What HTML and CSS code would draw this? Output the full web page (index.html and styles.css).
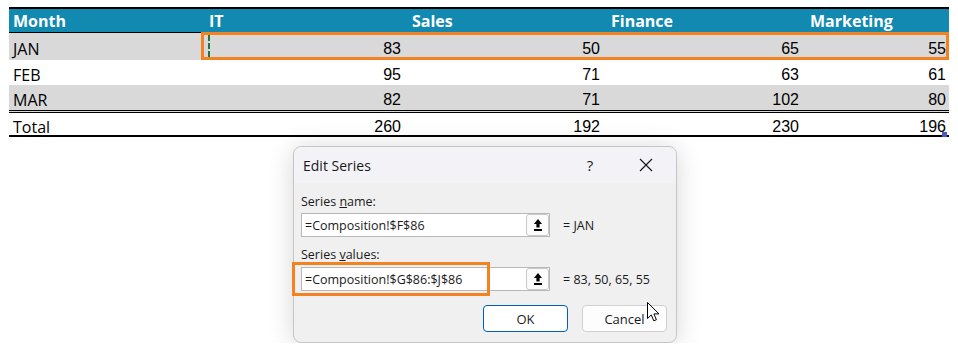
FILE: index.html
```html
<!DOCTYPE html>
<html>
<head>
<meta charset="utf-8">
<link rel="stylesheet" href="styles.css">
</head>
<body>
<div class="sheet">
  <div class="table">
    <div class="row head">
      <div class="c first">Month</div>
      <div class="c">IT</div>
      <div class="c">Sales</div>
      <div class="c">Finance</div>
      <div class="c">Marketing</div>
    </div>
    <div class="row body r-jan shade">
      <div class="c lbl">JAN</div>
      <div class="c num">83</div>
      <div class="c num">50</div>
      <div class="c num">65</div>
      <div class="c num">55</div>
    </div>
    <div class="row body r-feb">
      <div class="c lbl">FEB</div>
      <div class="c num">95</div>
      <div class="c num">71</div>
      <div class="c num">63</div>
      <div class="c num">61</div>
    </div>
    <div class="row body r-mar shade">
      <div class="c lbl">MAR</div>
      <div class="c num">82</div>
      <div class="c num">71</div>
      <div class="c num">102</div>
      <div class="c num">80</div>
    </div>
    <div class="row body r-tot">
      <div class="c lbl">Total</div>
      <div class="c num">260</div>
      <div class="c num">192</div>
      <div class="c num">230</div>
      <div class="c num">196</div>
    </div>
    <div class="sel"><div class="ants"></div></div>
    <div class="handle"></div>
  </div>

  <div class="dialog">
    <div class="titlebar">
      <span class="title">Edit Series</span>
      <span class="help">?</span>
      <span class="close">
        <svg width="14" height="14" viewBox="0 0 14 14"><path d="M1 1 L13 13 M13 1 L1 13" stroke="#1a1a1a" stroke-width="1.2" fill="none"/></svg>
      </span>
    </div>
    <div class="dbody">
      <div class="label">Series <u>n</u>ame:</div>
      <div class="field f1">
        <div class="input">
          <span>=Composition!$F$86</span>
          <span class="pick"><svg width="8" height="12" viewBox="0 0 8 12"><path d="M4 0 L8 5 L5.6 5 L5.6 8.5 L2.4 8.5 L2.4 5 L0 5 Z" fill="#000"/><rect x="0" y="10" width="8" height="2" fill="#000"/></svg></span>
        </div>
        <span class="result">= JAN</span>
      </div>
      <div class="label l2">Series <u>v</u>alues:</div>
      <div class="field f2">
        <div class="input">
          <span>=Composition!$G$86:$J$86</span>
          <span class="pick"><svg width="8" height="12" viewBox="0 0 8 12"><path d="M4 0 L8 5 L5.6 5 L5.6 8.5 L2.4 8.5 L2.4 5 L0 5 Z" fill="#000"/><rect x="0" y="10" width="8" height="2" fill="#000"/></svg></span>
        </div>
        <span class="result">= 83, 50, 65, 55</span>
        <div class="mark"></div>
      </div>
      <div class="buttons">
        <div class="btn ok">OK</div>
        <div class="btn">Cancel</div>
      </div>
    </div>
    <svg class="cursor" width="14" height="21" viewBox="0 0 14 21"><path d="M0.5 0.5 L0.5 16.5 L4.3 12.9 L6.8 18.8 L9.4 17.7 L6.9 11.9 L12 11.9 Z" fill="#fff" stroke="#000" stroke-width="1" stroke-linejoin="miter"/></svg>
  </div>
</div>
</body>
</html>
```
FILE: styles.css
```css
* { box-sizing: border-box; }
body {
  margin: 0;
  background: #fff;
  font-family: "Open Sans", "Noto Sans", sans-serif;
  color: #000;
}
.sheet {
  padding: 7px 0 0 9px;
}
.table {
  position: relative;
  width: 940px;
}
.row {
  display: grid;
  grid-template-columns: 192px 203px 199px 199px 147px;
  align-items: center;
}
.c {
  line-height: 18px;
  white-space: nowrap;
}
.head {
  height: 26px;
  background: #1289b1;
  color: #fff;
  font-weight: 700;
  font-size: 16px;
  border-top: 2px solid #000;
  border-bottom: 1px solid #000;
}
.head .c { padding-left: 8px; }
.head .c.first { padding-left: 4px; }
.body {
  font-size: 16px;
  padding-top: 5px;
}
.shade { background: #d9d9d9; }
.r-jan { height: 27px; }
.r-feb { height: 25px; }
.r-mar { height: 28px; border-bottom: 3px double #000; }
.r-tot { height: 24px; border-bottom: 2px solid #000; }
.lbl {
  padding-left: 4px;
  font-family: "Open Sans", sans-serif;
}
.num {
  text-align: right;
  padding-right: 3px;
  font-family: "Liberation Sans", Arial, sans-serif;
}
.sel {
  position: absolute;
  left: 192px;
  top: 25px;
  width: 748px;
  height: 28px;
  border: 3px solid #f58220;
}
.ants {
  position: absolute;
  left: 4px;
  top: 0;
  width: 2px;
  height: 22px;
  background: repeating-linear-gradient(to bottom, #217346 0 6px, transparent 6px 8px);
}
.handle {
  position: absolute;
  left: 933px;
  top: 125px;
  width: 5px;
  height: 5px;
  background: #4a5bbf;
}

/* dialog */
.dialog {
  position: relative;
  margin: 9px 0 0 284px;
  width: 384px;
  background: #f0f0f0;
  border: 1px solid #c6c6c6;
  border-radius: 8px;
  box-shadow: 0 2px 26px rgba(0, 0, 0, 0.16);
  color: #1a1a1a;
}
.titlebar {
  height: 36px;
  display: flex;
  align-items: center;
  padding-left: 9px;
  background: #f3f2f6;
  border-radius: 8px 8px 0 0;
}
.title {
  font-size: 14px;
}
.help {
  margin-left: auto;
  width: 46px;
  margin-right: 3px;
  text-align: center;
  font-size: 15px;
}
.close {
  width: 60px;
  display: flex;
  justify-content: center;
  align-items: center;
}
.dbody {
  padding: 10px 9px 10px 7px;
}
.label {
  font-size: 12.5px;
  line-height: 17px;
}
.label.l2 { margin-top: 9px; }
.field {
  position: relative;
  display: flex;
  align-items: center;
}
.f1 { margin-top: 3px; }
.f2 { margin-top: 4px; }
.input {
  width: 249px;
  height: 24px;
  border: 1px solid #b8b8b8;
  background: #fff;
  display: flex;
  align-items: center;
  padding-left: 3px;
  font-size: 12.5px;
}
.pick {
  margin-left: auto;
  width: 23px;
  height: 22px;
  border: 1px solid #c8c8c8;
  border-radius: 3px;
  background: #fbfbfb;
  display: flex;
  align-items: center;
  justify-content: center;
}
.result {
  margin-left: 13px;
  font-size: 12.5px;
}
.mark {
  position: absolute;
  left: -9px;
  top: -5px;
  width: 198px;
  height: 34px;
  border: 3px solid #f58220;
}
.buttons {
  margin-top: 14px;
  display: flex;
  justify-content: flex-end;
  gap: 14px;
}
.btn {
  width: 85px;
  height: 27px;
  border: 1px solid #d0d0d0;
  border-radius: 4px;
  background: #fdfdfd;
  font-size: 13px;
  display: flex;
  align-items: center;
  justify-content: center;
}
.btn.ok {
  background: #fff;
  border-color: #005fb8;
}
.cursor {
  position: absolute;
  left: 353px;
  top: 155px;
}
```
